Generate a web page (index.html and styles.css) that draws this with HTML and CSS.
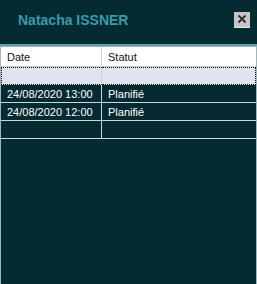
FILE: index.html
```html
<!DOCTYPE html>
<html lang="fr">
<head>
    <meta charset="UTF-8">
    <title>Natacha ISSNER</title>
    <link rel="stylesheet" href="styles.css">
</head>
<body>
<div class="window">
    <div class="title-bar">
        <h1 class="title">Natacha ISSNER</h1>
        <button class="close-btn" aria-label="Fermer">
            <svg width="10" height="10" viewBox="0 0 10 10">
                <path d="M1.5 1.5 L8.5 8.5 M8.5 1.5 L1.5 8.5" stroke="#2b2b2b" stroke-width="1.8"/>
            </svg>
        </button>
    </div>
    <div class="grid-panel">
        <table class="grid">
            <thead>
                <tr>
                    <th class="col-date">Date</th>
                    <th>Statut</th>
                </tr>
            </thead>
            <tbody>
                <tr class="selected">
                    <td></td>
                    <td></td>
                </tr>
                <tr>
                    <td>24/08/2020 13:00</td>
                    <td>Planifié</td>
                </tr>
                <tr>
                    <td>24/08/2020 12:00</td>
                    <td>Planifié</td>
                </tr>
                <tr>
                    <td></td>
                    <td></td>
                </tr>
            </tbody>
        </table>
    </div>
</div>
</body>
</html>
```

FILE: styles.css
```css
html, body {
    margin: 0;
    height: 100%;
    background-color: #062a31;
}

.window {
    display: flex;
    flex-direction: column;
    height: 100%;
    font-family: "Liberation Sans", Arial, sans-serif;
}

.title-bar {
    display: flex;
    align-items: center;
    justify-content: space-between;
    height: 46px;
    padding: 0 7px 0 18px;
    border-bottom: 2px solid #5aa3ad;
    box-sizing: border-box;
}

.title {
    margin: 0;
    font-size: 14px;
    font-weight: bold;
    color: #3a9aa8;
    padding-bottom: 5px;
}

.close-btn {
    display: flex;
    align-items: center;
    justify-content: center;
    width: 16px;
    height: 16px;
    padding: 0;
    margin-bottom: 5px;
    border: none;
    border-bottom: 1px solid #e8e8e8;
    background-color: #c6c6c6;
}

.grid-panel {
    flex: 1;
    border-left: 1px solid #9fb7bb;
    border-right: 1px solid #9fb7bb;
}

.grid {
    width: 100%;
    border-collapse: separate;
    border-spacing: 0;
    table-layout: fixed;
    font-size: 11px;
}

.grid th, .grid td {
    height: 17px;
    padding: 0 6px;
    text-align: left;
    font-weight: normal;
    white-space: nowrap;
    border-bottom: 1px solid #c6dadd;
}

.grid th:first-child, .grid td:first-child {
    border-right: 1px solid #c6dadd;
}

.grid th {
    height: 19px;
    background-color: #ffffff;
    color: #111111;
    border-top: 1px solid #a9a9a9;
    border-bottom-color: #d0d0d0;
}

.grid th:first-child {
    border-right-color: #d0d0d0;
}

.col-date {
    width: 88px;
}

.grid td {
    color: #ffffff;
}

.grid tr.selected td {
    height: 16px;
    background-color: #dfe3ee;
    border-top: 1px dotted #000000;
    border-bottom: 1px dotted #000000;
}

.grid tr.selected td:first-child {
    border-left: 1px dotted #000000;
    border-right-color: #d0d0d0;
}

.grid tr.selected td:last-child {
    border-right: 1px dotted #000000;
}
```
